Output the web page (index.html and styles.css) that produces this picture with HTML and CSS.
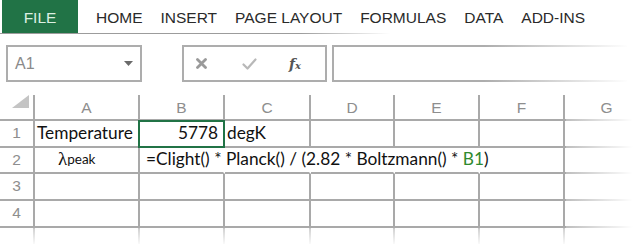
FILE: index.html
```html
<!DOCTYPE html>
<html>
<head>
<meta charset="utf-8">
<link rel="stylesheet" href="styles.css">
</head>
<body>
<div class="ribbon">
  <div class="tab file">FILE</div>
  <div class="tab">HOME</div>
  <div class="tab">INSERT</div>
  <div class="tab">PAGE LAYOUT</div>
  <div class="tab">FORMULAS</div>
  <div class="tab">DATA</div>
  <div class="tab">ADD-INS</div>
</div>
<div class="fbar">
  <div class="namebox">
    <span>A1</span>
    <svg class="dd" width="9" height="5" viewBox="0 0 9 5"><path d="M0 0H9L4.5 5Z" fill="#6a6a6a"/></svg>
  </div>
  <div class="btns">
    <svg class="cancel" width="11" height="11" viewBox="0 0 11 11"><path d="M1.5 1.5L9.5 9.5M9.5 1.5L1.5 9.5" stroke="#9a9a9a" stroke-width="2.8" stroke-linecap="round"/></svg>
    <svg class="enter" width="15" height="12" viewBox="0 0 15 12"><path d="M1.5 6.5L5.5 10.5L13.5 1.5" fill="none" stroke="#b8b8b8" stroke-width="2.2" stroke-linecap="round" stroke-linejoin="round"/></svg>
    <span class="fx"><i>f</i><small>x</small></span>
  </div>
  <div class="finput"></div>
</div>
<div class="sheet">
  <div class="grid">
    <div class="c h corner"><svg width="17" height="13" viewBox="0 0 17 13"><path d="M17 0V13H0Z" fill="#c4c4c4"/></svg></div>
    <div class="c h">A</div>
    <div class="c h">B</div>
    <div class="c h">C</div>
    <div class="c h">D</div>
    <div class="c h">E</div>
    <div class="c h">F</div>
    <div class="c h">G</div>

    <div class="c rn">1</div>
    <div class="c d">Temperature</div>
    <div class="c d num sel">5778</div>
    <div class="c d">degK</div>
    <div class="c d"></div>
    <div class="c d"></div>
    <div class="c d"></div>
    <div class="c d"></div>

    <div class="c rn">2</div>
    <div class="c d lam"><span class="l">λ</span><sub>peak</sub></div>
    <div class="c d spill"><span class="formula">=Clight() * Planck() / (2.82 * Boltzmann() * <span class="ref">B1</span>)</span></div>
    <div class="c d nb"></div>
    <div class="c d nb"></div>
    <div class="c d nb"></div>
    <div class="c d"></div>
    <div class="c d"></div>

    <div class="c rn">3</div>
    <div class="c d"></div><div class="c d"></div><div class="c d"></div><div class="c d"></div><div class="c d"></div><div class="c d"></div><div class="c d"></div>

    <div class="c rn">4</div>
    <div class="c d"></div><div class="c d"></div><div class="c d"></div><div class="c d"></div><div class="c d"></div><div class="c d"></div><div class="c d"></div>

    <div class="c rn tail"></div>
    <div class="c tail"></div><div class="c tail"></div><div class="c tail"></div><div class="c tail"></div><div class="c tail"></div><div class="c tail"></div><div class="c tail"></div>
  </div>
  <div class="fade-right"></div>
  <div class="fade-bottom"></div>
</div>
</body>
</html>
```
FILE: styles.css
```css
html, body {
  margin: 0;
  padding: 0;
  background: #fff;
}
body {
  width: 640px;
  height: 244px;
  overflow: hidden;
  font-family: "Liberation Sans", Arial, sans-serif;
}

/* ribbon tabs */
.ribbon {
  display: flex;
  gap: 18px;
  height: 34px;
  background: linear-gradient(to right, #9c9c9c 0, #9c9c9c 300px, rgba(156,156,156,0) 390px) left bottom / 100% 1px no-repeat;
}
.tab {
  font-size: 15.5px;
  line-height: 16px;
  padding-top: 10px;
  color: #2a2a2a;
  white-space: nowrap;
}
.tab.file {
  margin-left: 2px;
  width: 76px;
  height: 33px;
  box-sizing: border-box;
  background: #217346;
  color: #dcefe2;
  text-align: center;
}

/* formula bar */
.fbar {
  display: flex;
  margin-top: 11px;
  height: 37px;
}
.namebox {
  margin-left: 6px;
  width: 136px;
  box-sizing: border-box;
  border: 2px solid #adadad;
  display: flex;
  align-items: center;
  justify-content: space-between;
  padding: 0 7px 0 7px;
  font-size: 16px;
  color: #8a8a8a;
}
.btns {
  margin-left: 40px;
  width: 145px;
  box-sizing: border-box;
  border: 2px solid #adadad;
  display: flex;
  align-items: center;
}
.cancel { margin-left: 12px; }
.enter { margin-left: 35px; }
.fx {
  margin-left: 32px;
  font-family: "DejaVu Serif", "Liberation Serif", serif;
  font-weight: bold;
  color: #555;
  font-size: 14px;
}
.fx small { font-size: 10px; font-style: italic; }
.finput {
  margin-left: 5px;
  width: 295px;
  box-sizing: border-box;
  border-left: 2px solid #adadad;
  background:
    linear-gradient(to right, #adadad 0, #adadad 150px, rgba(173,173,173,0) 295px) left top / 100% 2px no-repeat,
    linear-gradient(to right, #adadad 0, #adadad 150px, rgba(173,173,173,0) 295px) left bottom / 100% 2px no-repeat;
}

/* sheet */
.sheet {
  position: relative;
  margin-top: 13px;
}
.grid {
  display: grid;
  grid-template-columns: 35px 105px 85px 86px 84px 85px 85px 85px;
  grid-template-rows: 26px 27px 26px 27px 27px 18px;
}
.c {
  box-sizing: border-box;
  border-right: 2px solid #a9a9a9;
  border-bottom: 2px solid #a9a9a9;
  min-width: 0;
}
.h {
  display: flex;
  align-items: center;
  justify-content: center;
  font-size: 15.5px;
  color: #8e8e8e;
  padding-top: 1px;
}
.corner {
  align-items: flex-start;
  justify-content: flex-end;
  padding: 0 4px 0 0;
}
.corner svg { display: block; }
.rn {
  display: flex;
  align-items: center;
  justify-content: center;
  font-size: 15.5px;
  color: #8e8e8e;
  padding-bottom: 1px;
}
.d {
  display: flex;
  align-items: center;
  padding: 0 5px 3px 2px;
  font-family: Lato, "Open Sans", sans-serif;
  font-size: 17.3px;
  color: #111;
  white-space: nowrap;
}
.num { justify-content: flex-end; }
.sel { position: relative; }
.sel::after {
  content: "";
  position: absolute;
  left: -2px;
  top: -1px;
  right: -2px;
  bottom: -2px;
  border: 2px solid #217346;
}
.nb { border-right-color: transparent; }
.spill {
  overflow: visible;
  border-right-color: transparent;
  padding-left: 6px;
  position: relative;
  z-index: 1;
}
.ref { color: #2f8a2f; }
.lam { padding-left: 23px; }
.lam .l {
  font-family: "Liberation Serif", serif;
  font-size: 19px;
}
.lam sub {
  font-size: 13.5px;
  vertical-align: -6px;
  line-height: 0;
}
.tail {
  border-bottom: none;
  border-right-color: #c8c8c8;
}

.fade-right {
  position: absolute;
  left: 566px;
  top: 24px;
  width: 74px;
  height: 130px;
  background: linear-gradient(to right, rgba(255,255,255,0.25), #fff 90%);
  z-index: 2;
}
.fade-bottom {
  position: absolute;
  left: 0;
  top: 134px;
  width: 640px;
  height: 20px;
  background: linear-gradient(to bottom, rgba(255,255,255,0.2), #fff 85%);
  z-index: 2;
}
```
